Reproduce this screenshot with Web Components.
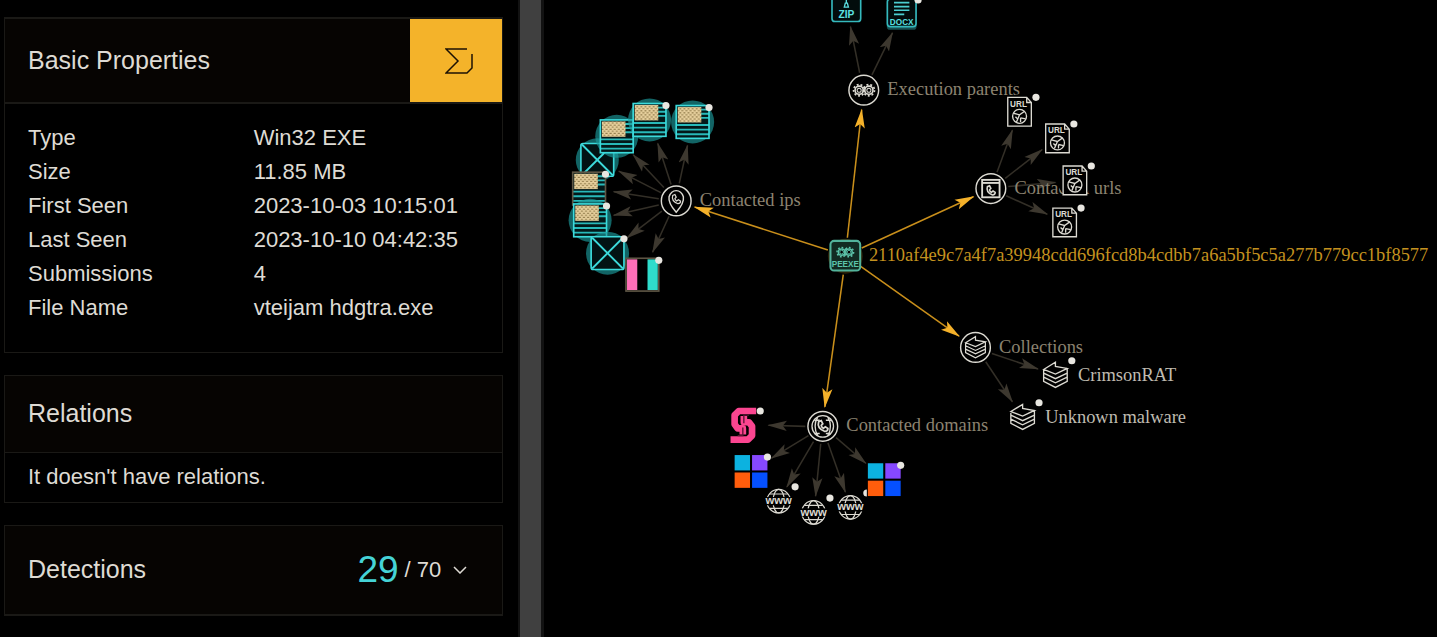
<!DOCTYPE html>
<html lang="en">
<head>
<meta charset="utf-8">
<title>Threat graph</title>
<style>
  html, body { margin: 0; height: 100%; background: #000; }
  body { font-family: "Liberation Sans", Arial, sans-serif; color: #dedbd4; }
</style>
</head>
<body>
<split-view>
  <aside-list slot="side">
    <info-card heading="Basic Properties" tall>
      <report-button slot="action"></report-button>
      <property-list></property-list>
    </info-card>
    <info-card heading="Relations">
      <card-note>It doesn't have relations.</card-note>
    </info-card>
    <info-card heading="Detections" folded>
      <detection-score slot="action" hits="29" total="70"></detection-score>
    </info-card>
  </aside-list>
  <relation-graph slot="main"></relation-graph>
</split-view>

<script>
class Base extends HTMLElement {
  connectedCallback() {
    if (this.shadowRoot) return;
    this.attachShadow({ mode: "open" }).innerHTML = this.render();
  }
}

customElements.define("split-view", class extends Base {
  render() {
    return `<style>
      :host { display: grid; grid-template-columns: minmax(0, 18fr) 26px minmax(0, 31fr); height: 100vh; overflow: hidden; }
      .bar { box-sizing: border-box; background: #404040; border-left: 2px solid #121212; border-right: 3px solid #121212; }
      .side, .main { min-width: 0; overflow: hidden; }
    </style>
    <div class="side"><slot name="side"></slot></div>
    <div class="bar" role="separator" aria-orientation="vertical"></div>
    <div class="main"><slot name="main"></slot></div>`;
  }
});

customElements.define("aside-list", class extends Base {
  render() {
    return `<style>
      :host { display: flex; flex-direction: column; gap: 22px; padding: 17px 15px 20px 4px; }
    </style><slot></slot>`;
  }
});

customElements.define("info-card", class extends Base {
  render() {
    return `<style>
      :host { display: block; border: 1px solid #1a1916; }
      :host([tall]) { border-top-width: 2px; }
      header { display: flex; align-items: stretch; justify-content: space-between; min-height: 76px; background: #060402; }
      :host([tall]) header { min-height: 83px; }
      :host([folded]) header { min-height: 88px; }
      h2 { margin: 0; padding: 0 0 2px 23px; align-self: center; font-size: 25px; line-height: 28px; font-weight: 400; }
      .body { border-top: 1px solid #1a1916; }
      :host([tall]) .body { border-top-width: 2px; }
    </style>
    <header><h2>${this.getAttribute("heading")}</h2><slot name="action"></slot></header>
    <div class="body"><slot></slot></div>`;
  }
});

customElements.define("card-note", class extends Base {
  render() {
    return `<style>
      :host { display: block; padding: 8px 23px; font-size: 22px; line-height: 32px; border-bottom: 1px solid transparent; }
    </style><slot></slot>`;
  }
});

customElements.define("report-button", class extends Base {
  render() {
    return `<style>
      :host { display: flex; width: 92px; }
      button { flex: 1; display: grid; place-items: center; border: 0; padding: 0 0 0 6px; background: #f4b32a; cursor: pointer; }
      svg { display: block; }
    </style>
    <button type="button" aria-label="Open report">
      <svg width="28" height="28" viewBox="0 0 28 28" fill="none" stroke="#1c1204" stroke-width="1.5">
        <path d="M22 2H1L13 14 1 26H22L27 21V7"/>
      </svg>
    </button>`;
  }
});

customElements.define("property-list", class extends Base {
  render() {
    const rows = [
      ["Type", "Win32 EXE"],
      ["Size", "11.85 MB"],
      ["First Seen", "2023-10-03 10:15:01"],
      ["Last Seen", "2023-10-10 04:42:35"],
      ["Submissions", "4"],
      ["File Name", "vteijam hdgtra.exe"]
    ];
    return `<style>
      :host { display: block; padding: 17px 23px 27px; }
      table { width: 100%; border-collapse: collapse; table-layout: fixed; font-size: 22px; line-height: 34px; }
      th, td { width: 50%; padding: 0; text-align: left; font-weight: 400; white-space: nowrap; }
    </style>
    <table><tbody>${rows.map(([k, v]) => `<tr><th scope="row">${k}</th><td>${v}</td></tr>`).join("")}</tbody></table>`;
  }
});

customElements.define("detection-score", class extends Base {
  render() {
    return `<style>
      :host { display: flex; padding-right: 35px; }
      button { display: flex; align-items: center; gap: 6px; border: 0; padding: 0; background: none; color: inherit; font: inherit; font-size: 22px; line-height: 26px; cursor: pointer; }
      .hits { color: #45d3d6; font-size: 37px; line-height: 44px; }
      svg { margin-left: 6px; }
    </style>
    <button type="button" aria-expanded="false">
      <span class="hits">${this.getAttribute("hits")}</span>
      <span>/ ${this.getAttribute("total")}</span>
      <svg width="14" height="8" viewBox="0 0 14 8" fill="none" stroke="#dedbd4" stroke-width="1.5"><path d="M1 1 7 7 13 1"/></svg>
    </button>`;
  }
});

/* ---- graph ---- */
const gear = (x, r) => `<circle cx="${x}" r="${r}" fill="#000" stroke-width="1.6"/><circle cx="${x}" r="${r + 1.5}" stroke-width="1.6" stroke-dasharray="1.9 1.9"/><circle cx="${x}" r="2"/>`;
const phone = `<path d="M-4-4.5Q-6 2 2 5Q5 5 5 2L2.500 0.500 0.500 2Q-1.500 0.500-1.500-1L0-2.500-1.500-5.500Z"/>`;
const books = `<path d="M-11.500-5.500 0-12.500V-8.500L11.500-6.500 0-1ZM-11.500-5.500V6L0 12 11.500 6V-6.500M-11.500-2 0 3.500 11.500-2M-11.500 2 0 7.500 11.500 2"/>`;
const doc = "#dcdad2";

const glyphs = {
  gears: `<g stroke="${doc}" fill="none">${gear(-4.5, 4)}${gear(5, 4)}</g>`,
  pin: `<g stroke="${doc}" fill="none" stroke-width="1.4"><path d="M0 11Q-8 2-7-4Q-5-10 0-10Q5-10 7-4Q8 2 0 11Z"/><g transform="translate(0 -1.500) scale(.85)">${phone}</g></g>`,
  browser: `<g stroke="${doc}" fill="none" stroke-width="1.8"><rect x="-8.500" y="-8.500" width="17" height="17"/><path d="M-8.500-5.500H8.500"/><g transform="translate(0 2) scale(.85)">${phone}</g></g>`,
  shelf: `<g stroke="${doc}" fill="none" stroke-width="1.4" transform="scale(.84)">${books}</g>`,
  call: `<g stroke="${doc}" fill="none" stroke-width="1.3"><circle r="10.500"/><path d="M-5-9Q-10 0-5 9M5-9Q10 0 5 9M-8-6H-3M3-6H8M-8 7H-3M3 7H8"/><g stroke-width="1.700">${phone}</g></g>`,
  books: `<circle r="13" fill="#000"/><g stroke="${doc}" fill="none" stroke-width="1.3">${books}</g>`,
  url: `<circle r="17" fill="#000"/><g stroke="${doc}" fill="none" stroke-width="1.3"><path d="M-11.500-14H7L11.500-9V14H-11.500ZM7-14V-9H11.500"/><circle cy="4.500" r="6.800"/><path d="M-6 1.500 0 3 5-0.500M0 3-3 10M1 6 6 7M1 6V10M-4 5-2 7"/></g><text class="tiny s8" y="-5" x="-1" fill="${doc}">URL</text>`,
  www: `<circle r="13" fill="#000"/><g stroke="${doc}" fill="none" stroke-width="1.2"><circle r="11.500"/><ellipse rx="5.500" ry="11.500"/><path d="M-9-7H9M-9 7H9"/></g><rect x="-13" y="-4" width="26" height="8" fill="#000"/><text class="tiny s11" y="3" fill="${doc}">www</text>`,
  zip: `<rect x="-14" y="-18" width="28" height="31" rx="3" fill="#020c0c" stroke="#35b9bd" stroke-width="1.6"/><path d="M0-9V-5M-2 -1H2L1-5H-1Z" stroke="#5ce0e2" fill="none" stroke-width="1.3"/><text class="tiny s9" y="10" fill="#5ce0e2">ZIP</text>`,
  docx: `<rect x="-14.500" y="-14" width="29" height="29" rx="3" fill="#174f51"/><rect x="-14" y="-15" width="28" height="27" rx="3" fill="#020c0c" stroke="#35b9bd" stroke-width="1.6"/><path d="M-7.500-11.500H7.500M-7.500-7.500H7.500M-7.500-4H7.500M-7.500 0H2.500" stroke="#4ccdd0" stroke-width="1.7"/><text class="tiny s8" y="10" fill="#5ce0e2">DOCX</text>`,
  peexe: `<circle r="17" fill="#2a2008"/><rect x="-14.500" y="-15" width="29" height="29" rx="3.500" fill="#122b22" stroke="#52b39b" stroke-width="2"/><g transform="translate(0 -4) scale(.9)" stroke="#5cc4aa" fill="none">${gear(-4, 3.5)}${gear(4, 3.5)}</g><text class="tiny s8" y="11" fill="#5cc4aa">PEEXE</text>`,
  us: `<rect x="-16" y="-16" width="32" height="32" fill="#03191a"/><path d="M8-12H16M8-8H16M8-4H16M-16 3H16M-16 7.500H16M-16 12H16" stroke="#28b9b9" stroke-width="1.8"/><rect x="-14.500" y="-14.500" width="23" height="15" fill="url(#stars)"/><rect x="-16" y="-16" width="32" height="32" fill="none" stroke="var(--edge)" stroke-width="1.600"/>`,
  cross: `<rect x="-16" y="-16" width="32" height="32" rx="2" fill="#021314" stroke="#3cdadb" stroke-width="1.600"/><path d="M-15-15 15 15M15-15-15 15" stroke="#3cdadb" stroke-width="1.800"/>`,
  bands: `<rect x="-16" y="-16" width="32" height="32" fill="#000"/><rect x="-15" y="-15" width="10" height="30" fill="#ff6fb8"/><rect x="5" y="-15" width="10" height="30" fill="#2fdccb"/><rect x="-16" y="-16" width="32" height="32" fill="none" stroke="#5d5544" stroke-width="1.600"/>`,
  tiles: `<rect x="-17" y="-17" width="34" height="34" fill="#000"/><rect x="-16" y="-16" width="15" height="15" fill="#0cb2e0"/><rect x="1" y="-16" width="15" height="15" fill="#8648ff"/><rect x="-16" y="1" width="15" height="15" fill="#ff5d0c"/><rect x="1" y="1" width="15" height="15" fill="#0550ff"/>`,
  ess: `<g fill="none" stroke="#fb4590" stroke-width="6.500" stroke-linejoin="round"><path d="M12-14H-5L-9-10V-1L-6 3H-1V9"/><path d="M-13 14H4L8 10V1L5-3H0V-9"/></g><path d="M5-10H0V-2M-6 10H-1V2" fill="none" stroke="#5a1433" stroke-width="1.300"/>`
};

const root = { x: 294, y: 250 };
const groups = [
  { x: 312, y: 88, icon: "gears", label: "Execution parents", items: [
    { x: 295, y: 8, icon: "zip" }, { x: 349, y: 14, icon: "docx", dot: 1 } ] },
  { x: 129, y: 196, icon: "pin", label: "Contacted ips", items: [
    { x: 52, y: 156, icon: "cross", halo: 1 }, { x: 71, y: 133, icon: "us", halo: 1 },
    { x: 103, y: 117, icon: "us", halo: 1, dot: 1 }, { x: 145, y: 119, icon: "us", halo: 1, dot: 1 },
    { x: 44, y: 184, icon: "us", dot: 1 }, { x: 45, y: 215, icon: "us", halo: 1, dot: 1 },
    { x: 62, y: 247, icon: "cross", halo: 1, dot: 1 }, { x: 96, y: 268, icon: "bands", dot: 1 } ] },
  { x: 436, y: 184, icon: "browser", label: "Contacted urls", items: [
    { x: 464, y: 109, icon: "url", dot: 1 }, { x: 501, y: 135, icon: "url", dot: 1 },
    { x: 518, y: 176, icon: "url", dot: 1 }, { x: 508, y: 217, icon: "url", dot: 1 } ] },
  { x: 421, y: 339, icon: "shelf", label: "Collections", items: [
    { x: 499, y: 366, icon: "books", dot: 1, label: "CrimsonRAT" },
    { x: 467, y: 407, icon: "books", dot: 1, label: "Unknown malware" } ] },
  { x: 272, y: 416, icon: "call", label: "Contacted domains", items: [
    { x: 195, y: 415, icon: "ess", dot: 1 }, { x: 202, y: 460, icon: "tiles", dot: 1 },
    { x: 229, y: 489, icon: "www", dot: 1 }, { x: 263, y: 500, icon: "www", dot: 1 },
    { x: 299, y: 495, icon: "www", dot: 1 }, { x: 332, y: 468, icon: "tiles", dot: 1 } ] }
];
const reach = { www: 16, url: 19, books: 18, ess: 24, zip: 18, docx: 20 };

function edge(a, b, start, stop, kind) {
  const dx = b.x - a.x, dy = b.y - a.y, d = Math.hypot(dx, dy);
  const p = t => `${Math.round(a.x + dx * t / d)} ${Math.round(a.y + dy * t / d)}`;
  return `<path class="${kind}" marker-end="url(#${kind}-head)" d="M${p(start)}L${p(d - stop)}"/>`;
}

function node(n) {
  return `<g transform="translate(${n.x} ${n.y})" style="--edge:${n.halo ? "#3cdadb" : "#5d5544"}">
    ${n.halo ? `<circle r="21" fill="#1b9a9b" fill-opacity=".65"/>` : ""}${glyphs[n.icon]}
    ${n.dot ? `<circle cx="16" cy="-14" r="3.500" fill="#e8e6e0"/>` : ""}
    ${n.label ? `<text class="leaf" x="22" y="6">${n.label}</text>` : ""}</g>`;
}

customElements.define("relation-graph", class extends Base {
  render() {
    return `<style>
      :host { display: block; height: 100%; }
      svg { display: block; width: 100%; height: 100%; }
      text { font-family: "Liberation Serif", "Times New Roman", serif; font-size: 18px; }
      .group { fill: #8c8370; }
      .leaf { fill: #bfbbb0; }
      .hash { fill: #c4921f; }
      .tiny { font-family: "Liberation Sans", Arial, sans-serif; font-weight: 700; text-anchor: middle; }
      .s8 { font-size: 8px; }
      .s9 { font-size: 10px; }
      .s11 { font-size: 11px; }
      .strong { stroke: #c98f1b; stroke-width: 1.5; }
      .weak { stroke: #332f27; stroke-width: 1.5; }
    </style>
    <svg viewBox="0 0 871 621" preserveAspectRatio="xMinYMin meet" role="img" aria-label="Relation graph">
      <defs>
        <marker id="strong-head" markerUnits="userSpaceOnUse" markerWidth="20" markerHeight="12" refX="18" refY="6" orient="auto"><path d="M0 1 19 6 0 11 4 6Z" fill="#f4b12a"/></marker>
        <marker id="weak-head" markerUnits="userSpaceOnUse" markerWidth="20" markerHeight="12" refX="18" refY="6" orient="auto"><path d="M0 1 19 6 0 11 4 6Z" fill="#3d382f"/></marker>
        <pattern id="stars" width="4" height="4" patternUnits="userSpaceOnUse"><rect width="4" height="4" fill="#e6cf9c"/><path d="M1 1H3M0 3H1M3 3H4" stroke="#8d7747"/></pattern>
      </defs>
      ${groups.map(g => g.items.map(i => edge(g, i, 17, reach[i.icon] || 24, "weak")).join("")).join("")}
      ${groups.map(g => edge(root, g, 18, 19, "strong")).join("")}
      ${groups.map(g => `<g transform="translate(${g.x} ${g.y})"><circle r="14.500" fill="#000" stroke="${doc}" stroke-width="1.400"/>${glyphs[g.icon]}<text class="group" x="23" y="5">${g.label}</text></g>`).join("")}
      <g transform="translate(${root.x} ${root.y})">${glyphs.peexe}<text class="hash" x="23" y="5">2110af4e9c7a4f7a39948cdd696fcd8b4cdbb7a6a5bf5c5a277b779cc1bf8577</text></g>
      ${groups.map(g => g.items.map(node).join("")).join("")}
    </svg>`;
  }
});
</script>
</body>
</html>
